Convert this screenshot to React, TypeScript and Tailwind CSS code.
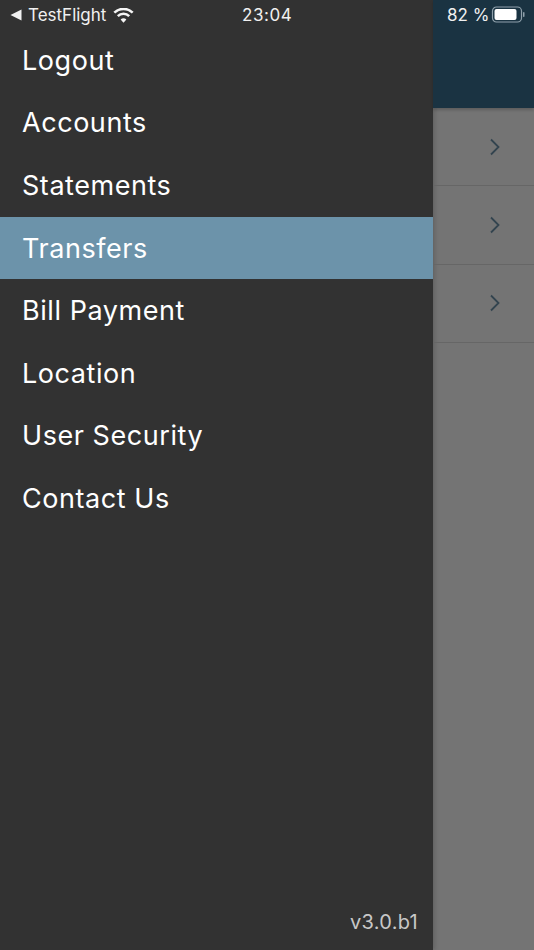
import React from 'react';

const menuItems = ['Logout', 'Accounts', 'Statements', 'Transfers', 'Bill Payment', 'Location', 'User Security', 'Contact Us'];

const Chevron: React.FC = () => (
  <svg width="12" height="18" viewBox="0 0 12 18" fill="none" stroke="#33444f" strokeWidth="1.8">
    <path d="M2 1.5 L9.5 9 L2 16.5" />
  </svg>
);

export default function App() {
  return (
    <div className="relative flex h-[950px] w-[534px] overflow-hidden bg-[#747474] font-['Inter',sans-serif] text-white">
      {/* Drawer */}
      <div className="flex h-full w-[433px] shrink-0 flex-col bg-[#323232] pt-[29px] shadow-[2px_0_4px_rgba(0,0,0,0.15)]">
        {menuItems.map((item) => (
          <div
            key={item}
            className={`flex h-[62.6px] items-center pl-[22px] text-[27px] leading-none tracking-[0.55px] ${item === 'Transfers' ? 'bg-[#6c93aa]' : ''}`}
          >
            {item}
          </div>
        ))}
        <div className="mt-auto pb-[16px] pr-[15px] text-right text-[20px] leading-[24px] tracking-[0.3px] text-[#c8c8c8]">v3.0.b1</div>
      </div>

      {/* Page behind the drawer */}
      <div className="flex min-w-0 flex-1 flex-col">
        <div className="h-[108px] shrink-0 bg-[#1a3342] shadow-[0_2px_3px_rgba(0,0,0,0.2)]" />
        {[0, 1, 2].map((i) => (
          <div key={i} className={`flex items-center justify-end border-b border-[#666666] pr-[33px] ${i === 0 ? 'h-[78px]' : 'h-[78.5px]'}`}>
            <Chevron />
          </div>
        ))}
      </div>

      {/* iOS status bar */}
      <div className="absolute inset-x-0 top-0 flex h-[30px] items-center text-[17px] leading-none text-[#f0f0f0]">
        <svg width="12" height="12" viewBox="0 0 12 12" className="ml-[10px]" fill="#f0f0f0">
          <path d="M0.5 6 L11.5 0.5 V11.5 Z" />
        </svg>
        <span className="ml-[6px]">TestFlight</span>
        <svg width="21" height="15" viewBox="0 0 21 15" className="ml-[7px]" fill="none" stroke="#f5f5f5" strokeWidth="2.5">
          <path d="M1.300 4.700a13 13 0 0 1 18.400 0" />
          <path d="M4.800 8.200a8 8 0 0 1 11.400 0" />
          <path d="M10.500 14.800 L7.600 11.600a4.200 4.200 0 0 1 5.800 0Z" fill="#f5f5f5" stroke="none" />
        </svg>
        <span className="absolute left-[242px] tracking-[0.55px]">23:04</span>
        <span className="absolute left-[447px]">82 %</span>
        <svg width="36" height="18" viewBox="0 0 36 18" className="absolute left-[491px] top-[6px]" fill="none">
          <rect x="1.500" y="1" width="29" height="15" rx="4" stroke="#8fa0ab" strokeWidth="1.200" />
          <rect x="3.500" y="3" width="22" height="11" rx="2" fill="#ffffff" />
          <rect x="32" y="6" width="1.500" height="5" rx="0.700" fill="#8fa0ab" />
        </svg>
      </div>
    </div>
  );
}
